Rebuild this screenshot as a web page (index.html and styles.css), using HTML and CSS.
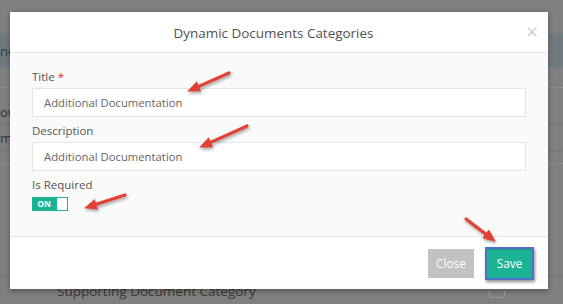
FILE: index.html
```html
<!DOCTYPE html>
<html>
<head>
<meta charset="utf-8">
<link rel="stylesheet" href="styles.css">
</head>
<body>
<div class="page">
  <div class="band"><span class="cut">ne</span></div>
  <div class="row r1"></div>
  <div class="row r2"><span class="cut">ow</span></div>
  <div class="row r3"><span class="cut">m</span></div>
  <div class="row r4"></div>
  <div class="row r5"></div>
  <div class="row r6"><span class="sup">Supporting Document Category</span><span class="chk"></span></div>
</div>

<div class="modal">
  <div class="modal-header">
    <h4 class="modal-title">Dynamic Documents Categories</h4>
    <span class="close">&times;</span>
  </div>
  <div class="modal-body">
    <label class="lbl">Title <span class="req">*</span></label>
    <div class="input">Additional Documentation</div>
    <label class="lbl">Description</label>
    <div class="input">Additional Documentation</div>
    <label class="lbl">Is Required</label>
    <div class="toggle"><span class="on">ON</span><span class="knob"></span></div>
  </div>
  <div class="modal-footer">
    <button class="btn btn-close">Close</button>
    <button class="btn btn-save">Save</button>
  </div>
</div>

<svg class="arrows" width="563" height="304" viewBox="0 0 563 304">
  <defs>
    <marker id="ah" markerUnits="userSpaceOnUse" markerWidth="13" markerHeight="11" viewBox="0 0 13 11" refX="6" refY="5.5" orient="auto">
      <path d="M0,0 L13,5.5 L0,11 Z" fill="#e53f35"/>
    </marker>
  </defs>
  <g stroke="#e53f35" stroke-width="3.2" stroke-linecap="round" fill="none">
    <line x1="229" y1="73" x2="193.5" y2="88.6" marker-end="url(#ah)"/>
    <line x1="247" y1="126" x2="205.5" y2="144.6" marker-end="url(#ah)"/>
    <line x1="125" y1="195" x2="90.7" y2="206.1" marker-end="url(#ah)"/>
    <line x1="466" y1="219" x2="490.2" y2="237.4" marker-end="url(#ah)"/>
  </g>
</svg>
</body>
</html>
```
FILE: styles.css
```css
html, body {
  margin: 0;
  padding: 0;
}
body {
  width: 563px;
  height: 304px;
  overflow: hidden;
  background: #7f7f7f;
  font-family: "Open Sans", "DejaVu Sans", sans-serif;
  position: relative;
}
.page {
  padding-top: 33px;
}
.band {
  height: 34px;
  background: #6f7a7e;
  border-bottom: 1px solid #6a8a86;
  line-height: 36px;
  font-size: 13px;
  color: #2c3a40;
  overflow: hidden;
  white-space: nowrap;
}
.cut {
  display: inline-block;
  padding-left: 0;
}
.row {
  overflow: hidden;
  white-space: nowrap;
  font-size: 13px;
  color: #333;
}
.r1 {
  height: 19px;
  border-bottom: 1px dotted #9b9b9b;
}
.r2 {
  height: 35px;
  border-bottom: 1px solid #727272;
  line-height: 48px;
}
.r3 {
  height: 26px;
  border-bottom: 1px solid #727272;
  line-height: 28px;
}
.r4 {
  height: 12px;
  border-bottom: 1px dotted #9b9b9b;
}
.r5 {
  height: 111px;
  border-bottom: 1px solid #727272;
}
.r6 {
  height: 26px;
  display: grid;
  grid-template-columns: 57px 432px 16px;
  align-items: start;
}
.sup {
  grid-column: 2;
  margin-top: 6px;
  font-size: 13.5px;
  color: #3a3a3a;
}
.chk {
  grid-column: 3;
  margin-top: 6px;
  width: 14px;
  height: 14px;
  border: 1px solid #9a9a9a;
  border-radius: 3px;
}

.modal {
  position: absolute;
  left: 10px;
  top: 12px;
  width: 538px;
  background: #fff;
  box-shadow: 0 2px 5px rgba(0,0,0,0.35);
}
.modal-header {
  height: 40px;
  border-bottom: 1px solid #e7e7e7;
  display: flex;
  align-items: center;
  justify-content: center;
  position: relative;
}
.modal-title {
  margin: 0;
  font-size: 13.45px;
  font-weight: 400;
  color: #505050;
  padding-top: 1px;
  padding-right: 11px;
}
.close {
  position: absolute;
  right: 10px;
  top: 6px;
  font-size: 20px;
  color: #b8b8b8;
  font-weight: 300;
}
.modal-body {
  height: 167px;
  background: #fafafa;
  padding: 16px 22px 0 22px;
}
.lbl {
  display: block;
  font-size: 11.5px;
  line-height: 16px;
  color: #555;
  margin-bottom: 3px;
}
.req {
  color: #e3262b;
}
.input {
  height: 27px;
  border: 1px solid #e5e5e5;
  background: #fff;
  box-sizing: content-box;
  padding-left: 11px;
  line-height: 27px;
  font-size: 11.3px;
  color: #666;
  margin-bottom: 6px;
}
.toggle {
  display: flex;
  width: 36px;
  height: 14px;
  margin-top: 4px;
  background: #1ab394;
}
.on {
  width: 24px;
  font-size: 8.5px;
  font-weight: 700;
  color: #fff;
  text-align: center;
  line-height: 14px;
}
.knob {
  width: 10px;
  height: 12px;
  background: #fff;
  border: 1px solid #1ab394;
}
.modal-footer {
  height: 52px;
  border-top: 1px solid #e7e7e7;
  display: flex;
  justify-content: flex-end;
  align-items: center;
  padding-right: 14px;
  gap: 11px;
}
.btn {
  font-family: "Open Sans", "DejaVu Sans", sans-serif;
  font-size: 11.8px;
  color: #fff;
  border: none;
  padding: 0;
  cursor: pointer;
}
.btn-close {
  width: 46px;
  height: 29px;
  background: #c2c2c2;
}
.btn-save {
  width: 49px;
  height: 33px;
  background: #1ab394;
  border: 2px solid #4f72c9;
  box-shadow: 1px 2px 3px rgba(0,0,0,0.45), inset 0 1px 0 #179a80;
}

.arrows {
  position: absolute;
  left: 0;
  top: 0;
  filter: drop-shadow(1px 2px 1.5px rgba(0,0,0,0.35));
}
```
